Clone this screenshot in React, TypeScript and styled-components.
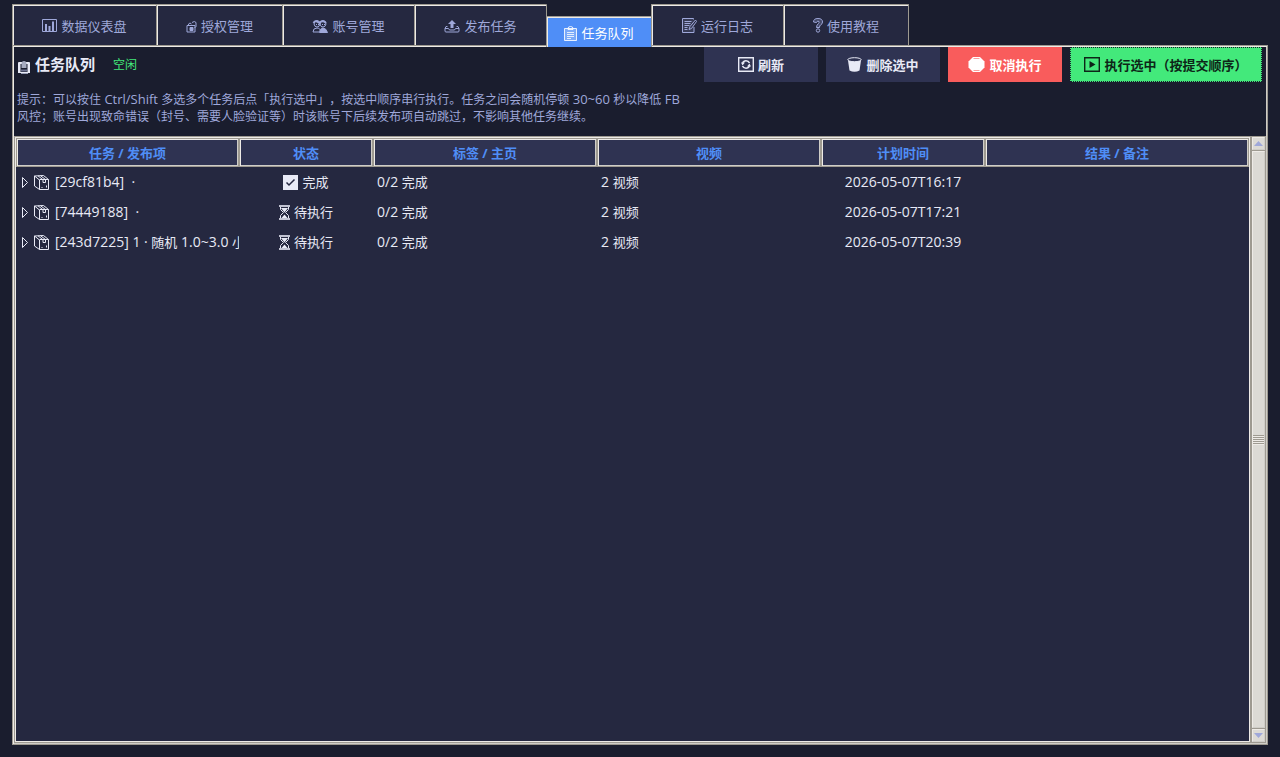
import React from "react";
import styled, { createGlobalStyle } from "styled-components";

const c = {
  bg: "#1a1d2e",
  card: "#252840",
  raised: "#2f3352",
  accent: "#4f8ef7",
  danger: "#f95c5c",
  success: "#43e97b",
  text: "#e8eaf6",
  muted: "#9fa8da",
  edge: "#9e9a91",
  light: "#eeebe7",
  dark: "#cfcdc8",
  face: "#dcdad5",
};

const Global = createGlobalStyle`
  *, *::before, *::after { box-sizing: border-box; }
  body {
    margin: 0;
    background: ${c.bg};
    color: ${c.text};
    font-family: "Open Sans", "Noto Sans CJK SC", sans-serif;
    font-size: 13px;
    text-spacing-trim: space-all;
  }
  button, a { font: inherit; color: inherit; }
`;

const Page = styled.div`
  min-height: 100vh;
  padding: 4px 12px 12px;
  display: flex;
  flex-direction: column;
`;

const Tabs = styled.nav`
  display: flex;
  align-items: flex-end;
  position: relative;
  z-index: 1;
`;

const Tab = styled.a<{ $w: number; $active?: boolean }>`
  display: flex;
  align-items: center;
  justify-content: center;
  gap: 4px;
  width: ${(p) => p.$w}px;
  height: ${(p) => (p.$active ? 31 : 41)}px;
  margin-bottom: ${(p) => (p.$active ? -2 : 0)}px;
  padding-top: ${(p) => (p.$active ? 2 : 1)}px;
  text-decoration: none;
  white-space: nowrap;
  line-height: 20px;
  background: ${(p) => (p.$active ? c.accent : c.card)};
  color: ${(p) => (p.$active ? "#ffffff" : c.muted)};
  border-left: 1px solid ${c.edge};
  border-top: 1px solid ${c.edge};
  border-radius: 1px 1px 0 0;
  box-shadow: inset 1px 1px 0 ${c.light}, 1px 0 0 ${c.edge};
  &:last-child {
    border-right: 1px solid ${c.edge};
    box-shadow: inset 1px 1px 0 ${c.light};
  }
`;

const Pane = styled.main`
  flex: 1;
  display: flex;
  flex-direction: column;
  border: 1px solid ${c.edge};
  box-shadow: inset 1px 1px 0 ${c.light}, inset -1px -1px 0 ${c.dark};
  padding: 1px;
`;

const Toolbar = styled.header`
  display: flex;
  align-items: flex-start;
  padding: 0 4px;
`;

const Title = styled.h1`
  display: flex;
  align-items: center;
  gap: 5px;
  margin: 0;
  font-size: 15px;
  line-height: 34px;
  font-weight: 700;
  color: ${c.text};
  svg { margin-top: 6px; }
`;

const State = styled.span`
  margin-left: 18px;
  font-size: 12px;
  line-height: 36px;
  color: ${c.success};
`;

const Actions = styled.div`
  display: flex;
  gap: 8px;
  margin-left: auto;
`;

const Action = styled.button<{ $tone?: "danger" | "success" }>`
  display: flex;
  align-items: center;
  justify-content: center;
  gap: 4px;
  min-width: ${(p) => (p.$tone === "success" ? 192 : 114)}px;
  height: 35px;
  padding: 0 12px;
  border: ${(p) => (p.$tone === "success" ? `1px dotted ${c.bg}` : "0")};
  font-weight: 700;
  line-height: 20px;
  background: ${(p) => (p.$tone ? c[p.$tone] : c.raised)};
  color: ${(p) => (p.$tone === "danger" ? "#ffffff" : p.$tone === "success" ? "#0d2618" : c.text)};
`;

const Hint = styled.p`
  margin: 0;
  padding: 8px 3px 11px;
  font-size: 12px;
  line-height: 17px;
  color: ${c.muted};
`;

const Latin = styled.span`
  font-size: 13px;
  line-height: 16px;
`;

const TreeArea = styled.section`
  flex: 1;
  display: flex;
`;

const Tree = styled.div`
  flex: 1;
  min-width: 0;
  background: ${c.card};
  border: 1px solid ${c.edge};
  box-shadow: inset 0 0 0 1px ${c.light};
  padding: 1px;
`;

const Table = styled.table`
  width: 100%;
  table-layout: fixed;
  border-collapse: separate;
  border-spacing: 0;
`;

const Th = styled.th`
  height: 29px;
  padding: 0;
  line-height: 20px;
  font-weight: 700;
  text-align: center;
  color: ${c.accent};
  background: ${c.raised};
  border: 1px solid ${c.edge};
  box-shadow: inset 1px 1px 0 ${c.light}, inset -1px -1px 0 ${c.dark};
`;

const Td = styled.td<{ $center?: boolean }>`
  height: 30px;
  padding: 0 0 0 ${(p) => (p.$center ? 0 : 4)}px;
  overflow: hidden;
  white-space: nowrap;
  line-height: 20px;
  font-size: 14px;
  text-align: ${(p) => (p.$center ? "center" : "left")};
`;

const Line = styled.span<{ $center?: boolean }>`
  display: flex;
  align-items: center;
  justify-content: ${(p) => (p.$center ? "center" : "flex-start")};
  gap: ${(p) => (p.$center ? 4 : 5)}px;
  padding-left: ${(p) => (p.$center ? 0 : 2)}px;
`;

const Han = styled.span`
  font-size: 13px;
`;

const Icon = styled.svg`
  flex: none;
  display: block;
  fill: none;
  stroke: currentColor;
`;

const Scrollbar = styled.div`
  width: 15px;
  display: flex;
  flex-direction: column;
  border: 1px solid ${c.edge};
  gap: 1px;
  background: ${c.edge};
`;

const Step = styled.button`
  height: 13px;
  padding: 0;
  border: 1px solid;
  border-color: ${c.light} ${c.dark} ${c.dark} ${c.light};
  background: ${c.face};
  display: flex;
  align-items: center;
  justify-content: center;
`;

const Thumb = styled.div`
  flex: 1;
  display: flex;
  flex-direction: column;
  align-items: stretch;
  justify-content: center;
  gap: 1px;
  border: 1px solid;
  border-color: ${c.light} ${c.dark} ${c.dark} ${c.light};
  background: ${c.face};
`;

const Grip = styled.i`
  height: 1px;
  background: ${c.edge};
  box-shadow: 0 1px 0 ${c.light};
`;

const ChartIcon = () => (
  <Icon width="15" height="15" viewBox="0 0 15 15">
    <path d="M.5 1.500h14v12H.5z" />
    <path d="M4 13V6 M7.500 13V8 M11 13V3.500" strokeWidth="2" />
  </Icon>
);
const LockIcon = () => (
  <Icon width="11" height="15" viewBox="0 -3 11 15">
    <path d="M1 4.500h8v6.500H1z M2.500 4.500V3q1.500-2 3 0 M6 1.500q2.500-2 4 0v4L8.500 7" />
    <path d="M4 6.500h3v3H4z" fill="currentColor" />
  </Icon>
);
const PeopleIcon = () => (
  <Icon width="16" height="14" viewBox="0 0 16 14">
    <path d="M2 5Q2 1.500 5 1.500T8 5Q7.500 8 5 8T2 5z M8 5q0-3.500 3-3.500t3 3.500q-.5 3-3 3T8 5z M1 13q0-4 4-4 2 0 3 1.500 M1 13h6" />
    <path d="M1.500 4q2-3.500 6 0 3-3.500 6.500 0" strokeWidth="2" />
    <path d="M7.500 13.500Q8 9 11 9t4.500 4.500z" fill="currentColor" />
    <path d="M4 5.500h1 M6 5.500h1 M10 5.500h1 M12 5.500h1" />
  </Icon>
);
const OutboxIcon = () => (
  <Icon width="16" height="14" viewBox="0 -2 16 14">
    <path d="M3.500 5.500H2L1 7.500v2.500q0 1 1 1h12q1 0 1-1V7.500l-1-2h-1.500 M1 7.500h3.500l1 1.500h5l1-1.500H15" />
    <path d="M8-1l4 4H9.500v4h-3V3H4z" fill="currentColor" stroke="none" />
  </Icon>
);
const ClipboardIcon = () => (
  <Icon width="13" height="15" viewBox="0 0 13 15">
    <path d="M.5 2.500h12v12H.5z" fill="currentColor" fillOpacity=".25" strokeOpacity=".85" />
    <path d="M4 2.500q0-2 2.500-2T9 2.500v1H4z" strokeOpacity=".85" />
    <path d="M3 6.500h7 M3 8.500h7 M3 10.500h7 M3 12.500h4" strokeOpacity=".8" />
  </Icon>
);
const MemoIcon = () => (
  <Icon width="15" height="15" viewBox="0 0 15 15">
    <path d="M11.500 1.500V.5H.5v14h11.500V9" fill="currentColor" fillOpacity=".15" />
    <path d="M2.500 3.500h7 M2.500 5.500h6 M2.500 7.500h5 M2.500 9.500h3 M2.500 11.500h3" />
    <path d="M13.500 2L8 8.500l-1 3L9.500 10.500l5-7z" />
  </Icon>
);
const QuestionIcon = () => (
  <Icon width="10" height="15" viewBox="0 0 10 15">
    <path d="M.5 4Q.5.5 5 .5T9.500 4Q9.500 6 7.500 7 6.500 7.500 6.500 9.500h-3Q3.500 7 5.500 5.500 6.500 4.500 6 3.500 4.500 2 3.500 4.500z" fill="currentColor" fillOpacity=".25" />
    <circle cx="5" cy="12.500" r="1.700" />
  </Icon>
);
const TitleIcon = () => (
  <Icon width="12" height="14" viewBox="0 0 12 14">
    <path d="M0 3q0-1 1-1h10q1 0 1 1v10H0z" fill="currentColor" stroke="none" />
    <path d="M3 13h7v1H3z" fill="#9aa0b8" stroke="none" />
    <path d="M2.500 4h7v8h-7z" fill="#1a1d2e" stroke="none" />
    <path d="M3.500 4q0-3 2.500-3t2.500 3v4h-5z" fill="#a6abc0" stroke="none" />
    <path d="M3 9.500h6v2H3z" fill="#6b7190" stroke="none" />
  </Icon>
);
const RefreshIcon = () => (
  <Icon width="16" height="15" viewBox="0 0 16 15">
    <path d="M.7.700h14.600v13.600H.7z" strokeWidth="1.400" />
    <path d="M11.500 6Q10.500 3.800 8 3.800 5.500 3.800 4.700 6 M4.500 9Q5.500 11.200 8 11.200q2.500 0 3.300-2.200" strokeWidth="1.600" />
    <path d="M3 5.500h4L4.500 8.500z M13 9.500H9l2.500-3z" fill="currentColor" stroke="none" />
  </Icon>
);
const TrashIcon = () => (
  <Icon width="15" height="15" viewBox="0 0 15 15">
    <path d="M1 3.500h13L12.500 13.500q-5 2.500-10 0z" fill="currentColor" stroke="none" />
    <ellipse cx="7.500" cy="2.700" rx="6.700" ry="2" fill={c.raised} />
  </Icon>
);
const StopIcon = () => (
  <Icon width="17" height="15" viewBox="0 0 17 15">
    <path d="M5 0h7l4.500 4.500v6L12 15H5L.5 10.500v-6z" fill="currentColor" stroke="none" />
    <path d="M5.500 1.500h6 M5.500 13.500h6" stroke="#f95c5c" strokeOpacity=".6" />
  </Icon>
);
const PlayIcon = () => (
  <Icon width="16" height="15" viewBox="0 0 16 15">
    <path d="M.7.700h14.600v13.600H.7z" strokeWidth="1.400" />
    <path d="M5.500 4l6 3.500-6 3.500z" fill="currentColor" stroke="none" />
  </Icon>
);
const ArrowIcon = () => (
  <Icon width="7" height="11" viewBox="0 0 7 11">
    <path d="M.5.500l5 5-5 5z" />
  </Icon>
);
const PackageIcon = () => (
  <Icon width="16" height="15" viewBox="0 0 16 15">
    <path d="M.5 1L9.500.5 14.500 4.500v10H5.500L.5 11z M.5 1L5.500 5v9.500 M5.500 4.500h9" />
    <path d="M4 .8l5 4v2.700h2.500V4.500L6.500.7" />
    <path d="M12.500 12.500v-2 M7.500 12.500h1" />
  </Icon>
);
const CheckIcon = () => (
  <Icon width="15" height="15" viewBox="0 0 15 15">
    <path d="M0 0h15v15H0z" fill="currentColor" stroke="none" />
    <path d="M3.500 7.500l2.500 2.500 5.500-5.500" stroke={c.card} strokeWidth="1.500" />
  </Icon>
);
const HourglassIcon = () => (
  <Icon width="11" height="15" viewBox="0 0 11 15">
    <path d="M0 1h11 M0 14h11" strokeWidth="2" strokeOpacity=".8" />
    <path d="M1.500 2v2.500L4.500 7.500 1.500 10.500V13 M9.500 2v2.500L6.500 7.500l3 3V13" />
    <path d="M2 3h7L5.500 7.500z M5.500 9.500L8.500 13h-6z" fill="currentColor" stroke="none" />
  </Icon>
);

const tabs = [
  { w: 144, icon: <ChartIcon />, label: "数据仪表盘" },
  { w: 126, icon: <LockIcon />, label: "授权管理" },
  { w: 132, icon: <PeopleIcon />, label: "账号管理" },
  { w: 132, icon: <OutboxIcon />, label: "发布任务" },
  { w: 105, icon: <ClipboardIcon />, label: "任务队列", active: true },
  { w: 132, icon: <MemoIcon />, label: "运行日志" },
  { w: 126, icon: <QuestionIcon />, label: "使用教程" },
];

const columns = [
  { label: "任务 / 发布项", w: 223 },
  { label: "状态", w: 134 },
  { label: "标签 / 主页", w: 224 },
  { label: "视频", w: 224 },
  { label: "计划时间", w: 164 },
  { label: "结果 / 备注" },
];

const rows = [
  { name: <>[29cf81b4]&nbsp; ·</>, done: true, time: "2026-05-07T16:17" },
  { name: <>[74449188]&nbsp; ·</>, done: false, time: "2026-05-07T17:21" },
  { name: <>[243d7225] 1 · <Han>随机</Han> 1.0~3.0 <Han>小时</Han></>, done: false, time: "2026-05-07T20:39" },
];

export default function App() {
  return (
    <>
      <Global />
      <Page>
        <Tabs>
          {tabs.map((t) => (
            <Tab key={t.label} href="#" $w={t.w} $active={t.active} aria-current={t.active ? "page" : undefined}>
              {t.icon}
              {t.label}
            </Tab>
          ))}
        </Tabs>
        <Pane>
          <Toolbar>
            <Title><TitleIcon />任务队列</Title>
            <State>空闲</State>
            <Actions>
              <Action><RefreshIcon />刷新</Action>
              <Action><TrashIcon />删除选中</Action>
              <Action $tone="danger"><StopIcon />取消执行</Action>
              <Action $tone="success"><PlayIcon />执行选中（按提交顺序）</Action>
            </Actions>
          </Toolbar>
          <Hint>
            提示：可以按住<Latin> Ctrl/Shift </Latin>多选多个任务后点「执行选中」，按选中顺序串行执行。任务之间会随机停顿
            <Latin> 30~60 </Latin>秒以降低<Latin> FB</Latin>
            <br />
            风控；账号出现致命错误（封号、需要人脸验证等）时该账号下后续发布项自动跳过，不影响其他任务继续。
          </Hint>
          <TreeArea>
            <Tree>
              <Table>
                <colgroup>
                  {columns.map((col) => (
                    <col key={col.label} width={col.w} />
                  ))}
                </colgroup>
                <thead>
                  <tr>
                    {columns.map((col) => (
                      <Th key={col.label} scope="col">{col.label}</Th>
                    ))}
                  </tr>
                </thead>
                <tbody>
                  {rows.map((r) => (
                    <tr key={r.time}>
                      <Td>
                        <Line><ArrowIcon /><PackageIcon /><span>{r.name}</span></Line>
                      </Td>
                      <Td $center>
                        <Line $center>
                          {r.done ? <CheckIcon /> : <HourglassIcon />}
                          <Han>{r.done ? "完成" : "待执行"}</Han>
                        </Line>
                      </Td>
                      <Td>0/2 <Han>完成</Han></Td>
                      <Td>2 <Han>视频</Han></Td>
                      <Td $center>{r.time}</Td>
                      <Td />
                    </tr>
                  ))}
                </tbody>
              </Table>
            </Tree>
            <Scrollbar>
              <Step aria-label="向上滚动">
                <svg width="9" height="5" viewBox="0 0 9 5"><path d="M4.500 0L9 5H0z" fill={c.muted} /></svg>
              </Step>
              <Thumb><Grip /><Grip /><Grip /><Grip /><Grip /></Thumb>
              <Step aria-label="向下滚动">
                <svg width="9" height="5" viewBox="0 0 9 5"><path d="M0 0h9L4.500 5z" fill={c.muted} /></svg>
              </Step>
            </Scrollbar>
          </TreeArea>
        </Pane>
      </Page>
    </>
  );
}
